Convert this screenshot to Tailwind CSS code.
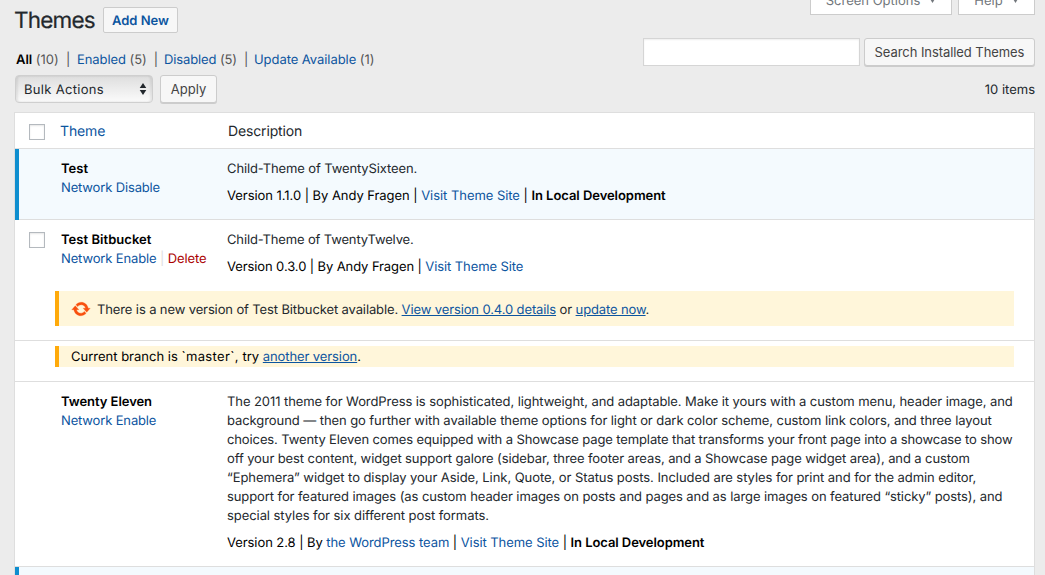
<!DOCTYPE html>
<html lang="en">
<head>
<meta charset="utf-8">
<title>Themes</title>
<script src="https://cdn.jsdelivr.net/npm/@tailwindcss/browser@4"></script>
</head>
<body class="bg-[#ececec] w-[1045px] h-[575px] overflow-hidden font-['Inter','Liberation_Sans',sans-serif] text-[13px] leading-[19px] text-[#23282d] [text-rendering:geometricPrecision]">
<div class="flex flex-col h-[575px] overflow-hidden pl-[14px] pr-[10px]">
  <header class="flex shrink-0 justify-between h-[49px]">
    <div class="flex items-start pt-[7px] gap-[8px]">
      <h1 class="text-[22.5px] leading-[27px] w-[81px] whitespace-nowrap tracking-[-0.8px] [-webkit-text-stroke:0.2px_#23282d]">Themes</h1>
      <a class="h-[26px] w-[75px] border border-[#ccc] rounded-[2px] bg-[#f7f7f7] text-[#0c559f] font-semibold leading-[26px] text-center">Add New</a>
    </div>
    <div class="flex gap-[6px] items-start text-[#72777c]">
      <div class="w-[142px] h-[15px] bg-white border border-t-0 border-[#ccc] flex justify-center gap-[9px] items-start"><span class="-mt-[8px]">Screen Options</span><svg class="-mt-[3px]" width="7" height="7" viewBox="0 0 7 7"><path d="M0.8 1.5h5.4L3.5 6z" fill="#72777c"/></svg></div>
      <div class="w-[77px] h-[15px] bg-white border border-t-0 border-[#ccc] flex justify-center gap-[9px] items-start"><span class="-mt-[8px]">Help</span><svg class="-mt-[3px]" width="7" height="7" viewBox="0 0 7 7"><path d="M0.8 1.5h5.4L3.5 6z" fill="#72777c"/></svg></div>
    </div>
  </header>
  <div class="flex shrink-0 justify-between h-[26px] pl-[2px]">
    <div class="flex items-start pt-[2px] text-[#555] whitespace-nowrap tracking-[-0.06px]">
      <span class="w-[61px] tracking-[-0.02px]"><b class="font-semibold text-black">All</b> (10) &nbsp;|</span>
      <span class="w-[87px] tracking-[-0.08px]"><a class="text-[#0c559f]">Enabled</a> (5) &nbsp;|</span>
      <span class="w-[90px] tracking-[-0.12px]"><a class="text-[#0c559f]">Disabled</a> (5) &nbsp;|</span>
      <span><a class="text-[#0c559f]">Update Available</a> (1)</span>
    </div>
    <div class="flex gap-[4px] -mt-[11px]">
      <div class="w-[217px] h-[28px] bg-white border border-[#d5d5d5] shadow-[inset_0_1px_2px_rgba(0,0,0,0.07)]"></div>
      <button class="w-[171px] h-[28px] border border-[#ccc] rounded-[3px] bg-[#f7f7f7] text-[#444] shadow-[0_1px_0_#ccc] whitespace-nowrap tracking-[-0.07px] pt-px">Search Installed Themes</button>
    </div>
  </div>
  <div class="flex shrink-0 justify-between h-[37px]">
    <div class="flex gap-[7px] pl-[1px]">
      <div class="w-[138px] h-[28px] border border-[#cfcfcf] rounded-[4px] bg-linear-to-b from-[#dedede] to-[#fbfbfb] shadow-[inset_2px_0_2px_rgba(0,0,0,0.08),inset_-2px_0_2px_rgba(0,0,0,0.08)] flex items-center justify-between pl-[8px] pr-[5px]"><span class="tracking-[0.3px] pt-[2px]">Bulk Actions</span><svg width="8" height="12" viewBox="0 0 8 12"><path d="M4 0l3.3 5H0.7zM4 12l3.3-5H0.7z" fill="#23282d"/></svg></div>
      <button class="w-[57px] h-[28px] border border-[#ccc] rounded-[3px] bg-[#f7f7f7] text-[#444] shadow-[0_1px_0_#ccc] pt-[1px]">Apply</button>
    </div>
    <span class="pt-[6px]">10 items</span>
  </div>
  <main class="shrink-0 w-[1021px] h-[470px] bg-white border border-[#dedede] border-b-0">
    <div class="flex h-[36px] border-b border-[#dedede] text-[14px] tracking-[-0.15px]">
      <div class="w-[45px] pl-[14px] pt-[11px]"><div class="size-[16px] border border-[#b4b9be] shadow-[inset_0_1px_2px_rgba(0,0,0,0.1)]"></div></div>
      <div class="w-[168px] pt-[9px] text-[#0c559f]">Theme</div>
      <div class="pt-[9px]">Description</div>
    </div>
    <section class="flex h-[71px] border-b border-[#dedede] bg-[#f4fafe] pt-[11px] relative">
      <div class="absolute left-0 top-0 w-[4px] h-[71px] bg-[#0e8ecf]"></div>
      <div class="w-[212px] pl-[46px]"><b class="block font-semibold text-black">Test</b><a class="text-[#0c559f] tracking-[-0.15px]">Network Disable</a></div>
      <div><p class="tracking-[-0.12px]">Child-Theme of TwentySixteen.</p><p class="mt-[8px] text-black tracking-[-0.05px]">Version 1.1.0 | By Andy Fragen | <a class="text-[#0c559f]">Visit Theme Site</a> | <b class="font-semibold">In Local Development</b></p></div>
    </section>
    <section class="h-[121px] border-b border-[#dedede]">
      <div class="flex h-[71px] pt-[11px]">
        <div class="w-[46px] pl-[14px] pt-[1px]"><div class="size-[16px] border border-[#b4b9be] shadow-[inset_0_1px_2px_rgba(0,0,0,0.1)]"></div></div>
        <div class="w-[166px] whitespace-nowrap tracking-[-0.13px]"><b class="block font-semibold text-black tracking-[0.04px]">Test Bitbucket</b><a class="text-[#0c559f]">Network Enable</a><span class="text-[#ddd]"> | </span><a class="text-[#a00]">Delete</a></div>
        <div><p class="tracking-[-0.15px]">Child-Theme of TwentyTwelve.</p><p class="mt-[8px] text-black tracking-[-0.1px]">Version 0.3.0 | By Andy Fragen | <a class="text-[#0c559f]">Visit Theme Site</a></p></div>
      </div>
      <div class="ml-[40px] mr-[20px] h-[35px] bg-[#fff6da] border-l-4 border-[#ffaa0a] flex items-center pl-[12px] gap-[6px]">
        <svg class="mt-[1px]" width="20" height="20" viewBox="0 0 20 20" fill="#f8500f" stroke="#f8500f" stroke-width="0.3"><path d="M10.2 3.28c3.53 0 6.43 2.61 6.92 6h2.08l-3.5 4-3.5-4h2.32c-.45-1.97-2.21-3.45-4.32-3.45-1.45 0-2.73.71-3.54 1.78L4.95 5.66C6.23 4.2 8.11 3.28 10.2 3.28zm-.4 13.44c-3.52 0-6.43-2.61-6.92-6H.8l3.5-4c1.17 1.33 2.33 2.67 3.5 4H5.48c.45 1.97 2.21 3.45 4.32 3.45 1.45 0 2.73-.71 3.54-1.78l1.71 1.95c-1.28 1.46-3.15 2.38-5.25 2.38z"/></svg>
        <p class="tracking-[-0.12px] pt-[4px]">There is a new version of Test Bitbucket available. <a class="text-[#0c559f] underline">View version 0.4.0 details</a> or <a class="text-[#0c559f] underline">update now</a>.</p>
      </div>
    </section>
    <section class="h-[41px] border-b border-[#dedede] pt-[5px]">
      <div class="ml-[40px] mr-[20px] h-[21px] bg-[#fff6da] border-l-4 border-[#ffaa0a] pl-[12px] pt-[2px] text-black">Current branch is <span class="tracking-[0.35px]">`master`,</span> try <a class="text-[#0c559f] underline tracking-[-0.1px]">another version</a>.</div>
    </section>
    <section class="flex h-[185px] border-b border-[#dedede] pt-[11px]">
      <div class="w-[212px] pl-[46px] shrink-0"><b class="block font-semibold text-black tracking-[-0.05px]">Twenty Eleven</b><a class="text-[#0c559f] tracking-[-0.15px]">Network Enable</a></div>
      <div class="whitespace-nowrap">
        <p class="tracking-[-0.08px]">The 2011 theme for WordPress is sophisticated, lightweight, and adaptable. Make it yours with a custom menu, header image, and</p>
        <p class="tracking-[-0.08px]">background — then go further with available theme options for light or dark color scheme, custom link colors, and three layout</p>
        <p class="tracking-[-0.12px]">choices. Twenty Eleven comes equipped with a Showcase page template that transforms your front page into a showcase to show</p>
        <p class="tracking-[-0.1px]">off your best content, widget support galore (sidebar, three footer areas, and a Showcase page widget area), and a custom</p>
        <p class="tracking-[-0.065px]">“Ephemera” widget to display your Aside, Link, Quote, or Status posts. Included are styles for print and for the admin editor,</p>
        <p class="tracking-[-0.09px]">support for featured images (as custom header images on posts and pages and as large images on featured “sticky” posts), and</p>
        <p class="tracking-[-0.07px]">special styles for six different post formats.</p>
        <p class="mt-[8px] text-black tracking-[-0.07px]">Version 2.8 | By <a class="text-[#0c559f]">the WordPress team</a> | <a class="text-[#0c559f]">Visit Theme Site</a> | <b class="font-semibold">In Local Development</b></p>
      </div>
    </section>
    <section class="h-[8px] bg-[#f4fafe]"><div class="w-[4px] h-[8px] bg-[#0e8ecf]"></div></section>
  </main>
</div>
</body>
</html>
